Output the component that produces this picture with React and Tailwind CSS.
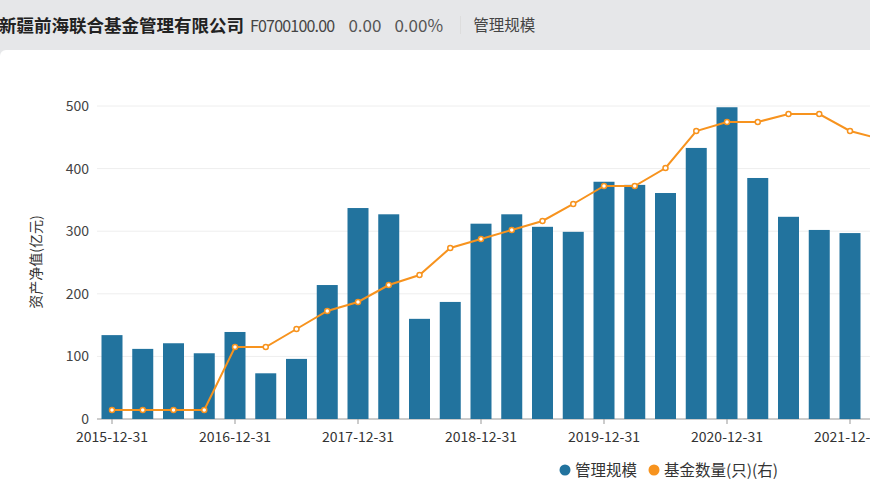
import React from "react";

const bars=[134,112,121,105,139,73,96,214,337,327,160,187,312,327,307,299,379,374,361,433,498,385,323,302,297,268];
const line=[410,410,410,410,347,347,329,311,302,285,275,248,239,230,221,204,186,186,168,131,122,122,114,114,131,139];
const cx=i=>112+i*30.75;
const Y=v=>419-v*0.626;

export default function App(){
  const font={fontFamily:'"Noto Sans CJK SC","Noto Sans",sans-serif'};
  return (
    <div className="w-[870px] h-[492px] bg-[#e6e7e9] overflow-hidden flex flex-col" style={font}>
      <div className="h-[50px] flex items-center shrink-0 whitespace-nowrap">
        <span className="text-[17.5px] font-bold text-[#222] ml-[-1px]">新疆前海联合基金管理有限公司</span>
        <span className="text-[16px] text-[#444] ml-[6px] tracking-[-0.8px]">F0700100.00</span>
        <span className="text-[17px] text-[#555] ml-[14px]">0.00</span>
        <span className="text-[17px] text-[#555] ml-[13px]">0.00%</span>
        <span className="w-px h-[18px] bg-[#ddd] ml-[17px]"></span>
        <span className="text-[15.5px] text-[#444] ml-[12px]">管理规模</span>
      </div>
      <div className="flex-1 bg-white rounded-tl-[6px]">
        <svg width="870" height="442" viewBox="0 50 870 442" className="block" style={font}>
          {[0,100,200,300,400,500].map(v=>(
            <g key={v}>
              <line x1="97" x2="870" y1={Y(v)} y2={Y(v)} stroke={v===0?"#999":"#eee"} strokeWidth="1"/>
              <text x="89" y={Y(v)+5} textAnchor="end" fontSize="14" fill="#444">{v}</text>
            </g>
          ))}
          <text transform="translate(41,262) rotate(-90)" textAnchor="middle" fontSize="14" fill="#333">资产净值(亿元)</text>
          {bars.map((b,i)=>(
            <rect key={i} x={cx(i)-10.5} y={Y(b)} width="21" height={419-Y(b)} fill="#22739e"/>
          ))}
          {["2015-12-31","2016-12-31","2017-12-31","2018-12-31","2019-12-31","2020-12-31","2021-12-31"].map((t,k)=>(
            <g key={t}>
              <line x1={cx(k*4)} x2={cx(k*4)} y1="419" y2="424" stroke="#999"/>
              <text x={cx(k*4)} y="442" textAnchor="middle" fontSize="14" fill="#333">{t}</text>
            </g>
          ))}
          <polyline points={line.map((y,i)=>`${cx(i)},${y}`).join(" ")} fill="none" stroke="#f7931e" strokeWidth="2"/>
          {line.map((y,i)=>(<circle key={i} cx={cx(i)} cy={y} r="2.5" fill="#fff" stroke="#f7931e" strokeWidth="1.5"/>))}
          <circle cx="565" cy="470" r="5.5" fill="#22739e"/>
          <text x="575" y="476" fontSize="15.5" fill="#333">管理规模</text>
          <circle cx="654" cy="470" r="5.5" fill="#f7931e"/>
          <text x="664" y="476" fontSize="15.5" fill="#333">基金数量(只)(右)</text>
        </svg>
      </div>
    </div>
  );
}
